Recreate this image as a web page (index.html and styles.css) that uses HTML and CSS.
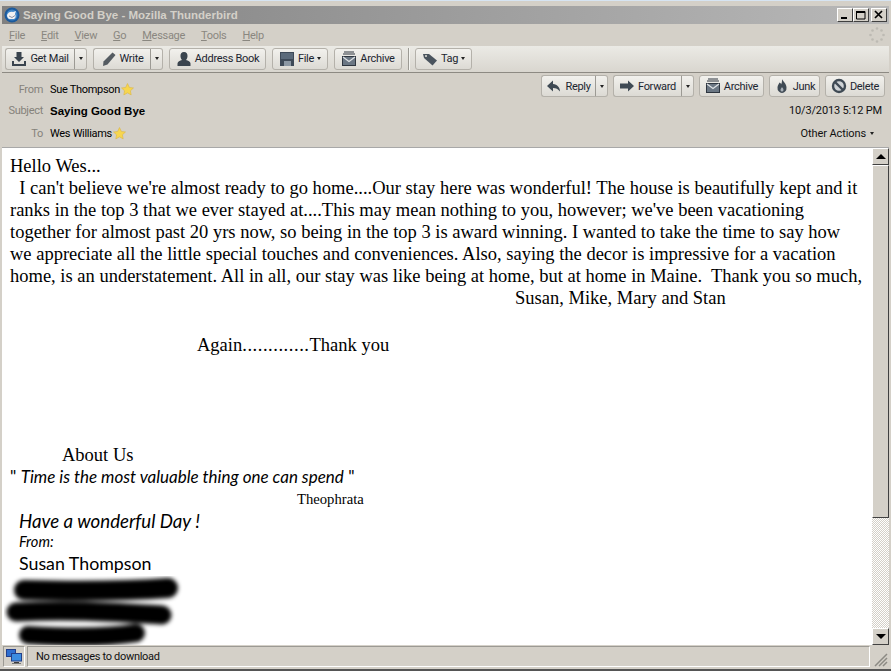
FILE: index.html
```html
<!DOCTYPE html>
<html lang="en">
  <head>
    <meta charset="UTF-8" />
    <meta name="viewport" content="width=device-width, initial-scale=1.0" />
    <title>Saying Good Bye - Mozilla Thunderbird</title>
    <link rel="stylesheet" href="styles.css">
  </head>
  <body>
    <div class="window">
      <div class="titlebar">
        <svg class="app-icon" width="16" height="16" viewBox="0 0 16 16">
          <circle cx="8" cy="8" r="7.5" fill="#1c5a9c" />
          <circle cx="8" cy="8" r="5.5" fill="#3f86c8" />
          <path d="M3 8c1-3 4-4 6-3l3-1-1 3c1 2 1 4-1 5H6C4 12 3 10 3 8z" fill="#f2f2f2" />
          <path d="M5 9l3 1.5L11 8.500" fill="none" stroke="#8a94a8" />
        </svg>
        <span class="title-text">Saying Good Bye - Mozilla Thunderbird</span>
        <div class="win-btns">
          <button class="win-btn"><svg width="10" height="10" viewBox="0 0 10 10"><rect x="1" y="7" width="6" height="2" fill="#000" /></svg></button>
          <button class="win-btn"><svg width="10" height="10" viewBox="0 0 10 10"><path d="M.5 1.500h8.500v7.500H.5z" fill="none" stroke="#000" /><rect y="1" width="9" height="2" fill="#000" /></svg></button>
          <button class="win-btn win-close"><svg width="10" height="10" viewBox="0 0 10 10"><path d="M1 1l7 7M8 1l-7 7" stroke="#000" stroke-width="1.700" /></svg></button>
        </div>
      </div>

      <div class="menubar">
        <span><u>F</u>ile</span>
        <span><u>E</u>dit</span>
        <span><u>V</u>iew</span>
        <span><u>G</u>o</span>
        <span><u>M</u>essage</span>
        <span><u>T</u>ools</span>
        <span><u>H</u>elp</span>
        <svg class="throbber" width="16" height="16" viewBox="0 0 16 16" fill="#bdbab3">
          <circle cx="8" cy="1.500" r="1.300" /><circle cx="12.500" cy="3.500" r="1.300" /><circle cx="14.500" cy="8" r="1.300" /><circle cx="12.500" cy="12.500" r="1.300" />
          <circle cx="8" cy="14.500" r="1.300" /><circle cx="3.500" cy="12.500" r="1.300" /><circle cx="1.500" cy="8" r="1.300" /><circle cx="3.500" cy="3.500" r="1.300" />
        </svg>
      </div>

      <div class="toolbar">
        <div class="btn-group gm">
          <button class="btn btn-main">
            <svg width="16" height="16" viewBox="0 0 16 16" fill="#3a444e"><path d="M5.500 1h5v5H13l-5 5-5-5h2.500z" /><path d="M1 10h2v3h10v-3h2v5H1z" /></svg>
            Get Mail
          </button>
          <button class="btn btn-drop"><i class="caret"></i></button>
        </div>
        <div class="btn-group wr">
          <button class="btn btn-main">
            <svg width="16" height="16" viewBox="0 0 16 16" fill="#555c62"><path d="M11.500 1.500l3 2.500-8 9.500-4.500 1.500.5-4.500z" /></svg>
            Write
          </button>
          <button class="btn btn-drop"><i class="caret"></i></button>
        </div>
        <button class="btn ab">
          <svg width="16" height="16" viewBox="0 0 16 16" fill="#3a444e"><path d="M8 1c2.500 0 3.800 2 3.500 4.500C11.300 7.500 10.500 8.500 10 9c2 .5 4.500 1.500 4.500 3.500V15h-13v-2.500C1.500 10.500 4 9.500 6 9c-.5-.5-1.300-1.500-1.500-3.500C4.200 3 5.500 1 8 1z" /></svg>
          Address Book
        </button>
        <button class="btn fl">
          <svg width="16" height="16" viewBox="0 0 16 16"><rect x="1" y="1" width="14" height="14" fill="#3e4a58" /><rect x="2" y="2" width="12" height="6" fill="#5b6a7a" /><rect x="5" y="10" width="7" height="5" fill="#8c98a4" /></svg>
          File <i class="caret"></i>
        </button>
        <button class="btn ar">
          <svg width="16" height="16" viewBox="0 0 16 16"><path d="M3 1h10M2 3h12" stroke="#2e3640" fill="none" /><rect x="1.500" y="5.500" width="13" height="9" fill="#6b7784" stroke="#2e3640" /><path d="M2 6l6 4.500L14 6" fill="none" stroke="#dfe3e6" stroke-width="1.200" /></svg>
          Archive
        </button>
        <div class="tool-sep"></div>
        <button class="btn tg">
          <svg width="16" height="16" viewBox="0 0 16 16" fill="#4a545e"><path d="M1 3h6l8 6.500-4.500 5L2 7z" /><circle cx="4" cy="5" r="1" fill="#e4e3dd" /></svg>
          Tag <i class="caret"></i>
        </button>
      </div>

      <div class="msg-header">
        <div class="header-top">
          <div class="header-row from-row">
            <span class="label">From</span>
            <span class="who">Sue Thompson</span>
            <svg class="star" width="13" height="13" viewBox="0 0 12 12"><path d="M6 .5l1.700 3.600 3.800.5-2.800 2.600.7 3.800L6 9.100 2.600 11l.7-3.800L.5 4.600l3.800-.5z" fill="#f7d64e" stroke="#dcb84a" stroke-width=".6" /></svg>
          </div>
          <div class="msg-actions">
            <div class="btn-group rp">
              <button class="btn btn-main">
                <svg width="16" height="16" viewBox="0 0 16 16" fill="#3f4a54"><path d="M7 2.500L1 8l6 5.500V10c3 0 5 1 7 3.500 0-4-2.500-7-7-7.500z" /></svg>
                Reply
              </button>
              <button class="btn btn-drop"><i class="caret"></i></button>
            </div>
            <div class="btn-group fw">
              <button class="btn btn-main">
                <svg width="16" height="16" viewBox="0 0 16 16" fill="#3f4a54"><path d="M9 2.500L15 8l-6 5.500V10.500H1v-5h8z" /></svg>
                Forward
              </button>
              <button class="btn btn-drop"><i class="caret"></i></button>
            </div>
            <button class="btn ar2">
              <svg width="16" height="16" viewBox="0 0 16 16"><path d="M3 1h10M2 3h12" stroke="#2e3640" fill="none" /><rect x="1.500" y="5.500" width="13" height="9" fill="#6b7784" stroke="#2e3640" /><path d="M2 6l6 4.500L14 6" fill="none" stroke="#dfe3e6" stroke-width="1.200" /></svg>
              Archive
            </button>
            <button class="btn jk">
              <svg width="16" height="16" viewBox="0 0 16 16" fill="#3f4a54"><path d="M8 1c.5 2 4.500 4.500 4.500 8.500A4.500 5 0 0 1 8 15a4.500 5 0 0 1-4.500-5.500C3.500 7 5 6 5.500 4.500 6.500 5 7 5.500 7 6.500 8 5 8 3 8 1z" /><path d="M8 9c.5 1 1.500 1.500 1.500 3a1.500 1.500 0 0 1-3 0c0-1 1-2 1.500-3z" fill="#aab2ba" /></svg>
              Junk
            </button>
            <button class="btn dl">
              <svg width="16" height="16" viewBox="0 0 16 16"><circle cx="8" cy="8" r="6" fill="#cfd3d6" stroke="#3f4a54" stroke-width="2.400" /><path d="M4 4l8 8" stroke="#3f4a54" stroke-width="2.400" /></svg>
              Delete
            </button>
          </div>
        </div>
        <div class="header-row subject-row">
          <span class="label">Subject</span>
          <span class="subject">Saying Good Bye</span>
          <span class="date">10/3/2013 5:12 PM</span>
        </div>
        <div class="header-row to-row">
          <span class="label">To</span>
          <span class="who">Wes Williams</span>
          <svg class="star" width="13" height="13" viewBox="0 0 12 12"><path d="M6 .5l1.700 3.600 3.800.5-2.800 2.600.7 3.800L6 9.100 2.600 11l.7-3.800L.5 4.600l3.800-.5z" fill="#f7d64e" stroke="#dcb84a" stroke-width=".6" /></svg>
          <span class="other-actions">Other Actions <i class="caret"></i></span>
        </div>
      </div>

      <div class="content">
        <div class="message">
          <p class="text">Hello Wes...</p>
          <p class="text">&nbsp; I can't believe we're almost ready to go home....Our stay here was wonderful! The house is beautifully kept and it<br>ranks in the top 3 that we ever stayed at....This may mean nothing to you, however; we've been vacationing<br>together for almost past 20 yrs now, so being in the top 3 is award winning. I wanted to take the time to say how<br>we appreciate all the little special touches and conveniences. Also, saying the decor is impressive for a vacation<br>home, is an understatement. All in all, our stay was like being at home, but at home in Maine.&nbsp; Thank you so much,</p>
          <p class="text names">Susan, Mike, Mary and Stan</p>
          <p class="text again">Again<span class="dots">.............</span>Thank you</p>
          <p class="text about">About Us</p>
          <p class="quote">" <em>Time is the most valuable thing one can spend</em> "</p>
          <p class="author">Theophrata</p>
          <p class="wish">Have a wonderful Day !</p>
          <p class="from-line">From:</p>
          <p class="signer">Susan Thompson</p>
          <svg class="scribble" width="190" height="76" viewBox="0 0 190 76">
            <defs><filter id="smudge" x="-10%" y="-50%" width="120%" height="200%"><feGaussianBlur stdDeviation="2.200" /></filter></defs>
            <g filter="url(#smudge)" stroke="#000" fill="none" stroke-linecap="round">
              <path d="M20 14C60 15 110 16 164 12" stroke-width="20" />
              <path d="M12 36C70 33 120 37 158 39" stroke-width="19" />
              <path d="M24 59C60 61 100 62 132 57" stroke-width="18" />
            </g>
          </svg>
        </div>
        <div class="scrollbar">
          <div class="sb-btn"><i class="arrow-up"></i></div>
          <div class="sb-thumb"></div>
          <div class="sb-track"></div>
          <div class="sb-btn"><i class="arrow-down"></i></div>
        </div>
      </div>

      <div class="statusbar">
        <div class="status-icon">
          <svg width="16" height="16" viewBox="0 0 16 16">
            <rect x="0.500" y="0.500" width="9" height="7" fill="#2f6fd0" stroke="#24408a" />
            <rect x="5.500" y="4.500" width="10" height="7.500" fill="#3d8de0" stroke="#24408a" />
            <rect x="8" y="13" width="5" height="1" fill="#3a3a3a" />
            <rect x="6" y="14" width="9" height="1" fill="#777" />
          </svg>
        </div>
        <div class="status-text">No messages to download</div>
        <div class="grip">
          <svg width="16" height="16" viewBox="0 0 16 16"><path d="M15 3L3 15M15 7L7 15M15 11L11 15" stroke="#8c8a84" stroke-width="1.500" /></svg>
        </div>
      </div>
    </div>
  </body>
</html>
```

FILE: styles.css
```css
html,
body {
  margin: 0;
  height: 100%;
}
body {
  font-family: Roboto, "Liberation Sans", Arial, sans-serif;
  font-size: 11px;
  letter-spacing: -0.3px;
  background-color: #d4d0c8;
  overflow: hidden;
}
.window {
  display: flex;
  flex-direction: column;
  box-sizing: border-box;
  height: 100vh;
  padding: 5px 2px 2px;
  background-color: #d4d0c8;
  border-top: 1px solid #d6e4f2;
  border-bottom: 2px solid #555;
}
.titlebar {
  display: flex;
  align-items: center;
  flex: none;
  height: 18px;
  padding-left: 2px;
  gap: 3px;
  background: linear-gradient(to right, #808080, #b8b8b8);
}
.title-text {
  font-family: "Liberation Sans", Arial, sans-serif;
  letter-spacing: 0;
  color: #d4d0c8;
  font-weight: bold;
  font-size: 11.5px;
}
.win-btns {
  display: flex;
  margin-left: auto;
  margin-right: 2px;
}
.win-btns .win-close {
  margin-left: 2px;
}
.win-btn {
  display: flex;
  align-items: center;
  justify-content: center;
  box-sizing: border-box;
  width: 16px;
  height: 14px;
  padding: 0;
  background-color: #d4d0c8;
  border: 1px solid;
  border-color: #fff #404040 #404040 #fff;
}
.menubar {
  display: flex;
  align-items: center;
  flex: none;
  height: 22px;
  gap: 16px;
  padding-left: 7px;
  color: #8a8780;
}
.throbber {
  margin-left: auto;
  margin-right: 4px;
}
.toolbar {
  display: flex;
  align-items: center;
  flex: none;
  box-sizing: border-box;
  height: 27px;
  padding: 0 0 1px 3px;
  gap: 6px;
  background: linear-gradient(to bottom, #ebeae5, #d9d6cf);
  border-bottom: 1px solid #8d8a83;
}
.btn {
  display: flex;
  align-items: center;
  justify-content: center;
  box-sizing: border-box;
  height: 22px;
  padding: 0;
  gap: 3px;
  font-family: Roboto, "Liberation Sans", Arial, sans-serif;
  font-size: 11px;
  letter-spacing: -0.3px;
  color: #1c2530;
  background: linear-gradient(to bottom, #f2f1ed, #dcdad4);
  border: 1px solid #b4b1aa;
  border-radius: 3px;
}
.btn-group {
  display: flex;
}
.btn-group .btn-main {
  border-radius: 3px 0 0 3px;
  border-right-color: #9c9a94;
}
.btn-group .btn-drop {
  width: 12px;
  border-left: 0;
  border-radius: 0 3px 3px 0;
}
.caret {
  display: inline-block;
  border-top: 3px solid #222;
  border-left: 2px solid transparent;
  border-right: 2px solid transparent;
}
.gm .btn-main { width: 70px; }
.wr .btn-main { width: 58px; }
.ab { width: 97px; }
.fl { width: 56px; }
.ar { width: 68px; }
.tg { width: 57px; }
.tool-sep {
  width: 1px;
  height: 22px;
  margin-right: -1px;
  background-color: #9c9a94;
  border-right: 1px solid #f4f4f0;
}
.msg-header {
  flex: none;
  display: flex;
  flex-direction: column;
  height: 75px;
  box-sizing: border-box;
  border-bottom: 1px solid #a8a8a8;
}
.header-top {
  display: flex;
  height: 26px;
}
.msg-actions {
  display: flex;
  margin-left: auto;
  padding-top: 2px;
  margin-right: 4px;
  gap: 5px;
}
.rp .btn-main { width: 55px; }
.fw .btn-main { width: 69px; }
.ar2 { width: 65px; }
.jk { width: 51px; }
.dl { width: 60px; }
.header-row {
  display: flex;
  align-items: center;
  height: 23px;
}
.from-row {
  height: 22px;
  margin-top: 5px;
}
.label {
  width: 41px;
  margin-right: 7px;
  text-align: right;
  color: #85827b;
}
.who {
  color: #000;
}
.star {
  margin-left: 1px;
}
.subject {
  font-family: "Liberation Sans", Arial, sans-serif;
  letter-spacing: 0;
  font-size: 11.5px;
  font-weight: bold;
  color: #000;
}
.date {
  margin-left: auto;
  margin-right: 7px;
  letter-spacing: -0.15px;
  color: #111;
}
.other-actions {
  display: flex;
  align-items: center;
  gap: 4px;
  margin-left: auto;
  margin-right: 15px;
  letter-spacing: -0.1px;
  color: #111;
}
.content {
  display: flex;
  flex: 1;
  min-height: 0;
  background-color: #fff;
}
.message {
  flex: 1;
  overflow: hidden;
  padding: 7px 0 0 8px;
  font-family: "Liberation Serif", "Times New Roman", serif;
  letter-spacing: 0;
  color: #000;
  white-space: nowrap;
}
.message p {
  margin: 0;
}
.text {
  font-size: 18.5px;
  line-height: 22px;
}
.names {
  padding-left: 505px;
}
.again {
  margin-top: 25px !important;
  padding-left: 187px;
}
.dots {
  letter-spacing: 0.55px;
}
.about {
  margin-top: 88px !important;
  padding-left: 52px;
}
.quote {
  font-family: Lato, "Open Sans", sans-serif;
  font-size: 17px;
  line-height: 22px;
}
.author {
  padding-left: 287px;
  font-size: 14.67px;
  line-height: 22px;
}
.wish {
  margin-top: -1px !important;
  padding-left: 9px;
  font-family: Lato, "Open Sans", sans-serif;
  font-style: italic;
  font-size: 18.67px;
  line-height: 24px;
}
.from-line {
  padding-left: 9px;
  font-family: Lato, "Open Sans", sans-serif;
  font-style: italic;
  font-size: 14.67px;
  line-height: 18px;
}
.signer {
  padding-left: 9px;
  font-family: Lato, "Open Sans", sans-serif;
  font-size: 17.8px;
  line-height: 24px;
}
.scribble {
  display: block;
  margin-top: 1px;
  margin-left: -6px;
}
.scrollbar {
  display: flex;
  flex-direction: column;
  flex: none;
  width: 17px;
  background-color: #d4d0c8;
}
.sb-btn {
  display: flex;
  align-items: center;
  justify-content: center;
  flex: none;
  box-sizing: border-box;
  height: 17px;
  background-color: #d4d0c8;
  border: 1px solid;
  border-color: #fff #404040 #404040 #fff;
}
.arrow-up {
  border-bottom: 5px solid #000;
  border-left: 5px solid transparent;
  border-right: 5px solid transparent;
}
.arrow-down {
  border-top: 5px solid #000;
  border-left: 5px solid transparent;
  border-right: 5px solid transparent;
}
.sb-thumb {
  flex: none;
  box-sizing: border-box;
  height: 353px;
  background-color: #d4d0c8;
  border: 1px solid;
  border-color: #fff #404040 #404040 #fff;
}
.sb-track {
  flex: 1;
  background: repeating-conic-gradient(#d4d0c8 0 25%, #fff 0 50%) 0 0 / 2px 2px;
}
.statusbar {
  display: flex;
  align-items: stretch;
  flex: none;
  height: 22px;
  gap: 2px;
  background-color: #d4d0c8;
  box-sizing: border-box;
  padding-top: 1px;
}
.status-icon {
  display: flex;
  align-items: center;
  justify-content: center;
  box-sizing: border-box;
  width: 22px;
  margin-left: 1px;
  border: 1px solid;
  border-color: #9c9a94 #fff #fff #9c9a94;
}
.status-text {
  flex: 1;
  display: flex;
  align-items: center;
  padding-left: 8px;
  color: #111;
  border: 1px solid;
  border-color: #9c9a94 #fff #fff #9c9a94;
}
.grip {
  display: flex;
  align-items: flex-end;
  width: 17px;
}
```
